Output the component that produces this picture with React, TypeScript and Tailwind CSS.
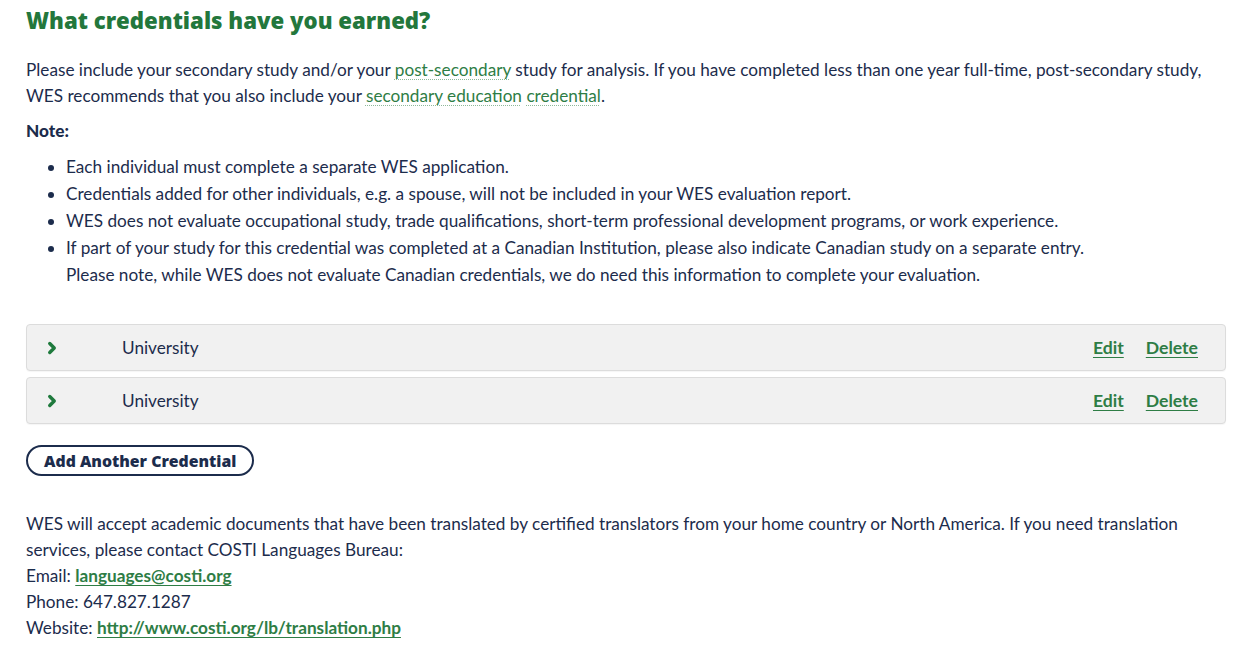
import { ChevronRight } from "lucide-react";

const notes = [
  "Each individual must complete a separate WES application.",
  "Credentials added for other individuals, e.g. a spouse, will not be included in your WES evaluation report.",
  "WES does not evaluate occupational study, trade qualifications, short-term professional development programs, or work experience.",
];

const credentials = ["University", "University"];

function DottedLink({ children }: { children: React.ReactNode }) {
  return (
    <a
      href="#"
      className="text-[#2e7d45] underline decoration-dotted decoration-[#8fb89a] decoration-1 underline-offset-[3px]"
    >
      {children}
    </a>
  );
}

function CredentialRow({ label }: { label: string }) {
  return (
    <div className="flex h-[47px] items-center rounded-[4px] border border-[#dcdcdc] bg-[#f1f1f1] pl-[16px] pr-[27px] shadow-[0_1px_1px_rgba(0,0,0,0.04)]">
      <ChevronRight className="size-[18px] text-[#1f7a3d]" strokeWidth={4.5} />
      <span className="ml-[61px] text-[#1c2c4c]">{label}</span>
      <div className="ml-auto flex gap-[22px] text-[17.6px] font-bold">
        <a href="#" className="text-[#2e7d45] underline underline-offset-[3px]">
          Edit
        </a>
        <a href="#" className="text-[#2e7d45] underline underline-offset-[3px]">
          Delete
        </a>
      </div>
    </div>
  );
}

export default function App() {
  return (
    <div className="min-h-screen bg-white font-['Lato',sans-serif] text-[17.2px] leading-[26px] text-[#1c2c4c]">
      <div className="w-[1226px] pl-[26px] pt-[6px]">
        <h1 className="font-['Open_Sans',sans-serif] text-[22.2px] font-extrabold leading-[30px] text-[#23773c]">
          What credentials have you earned?
        </h1>

        <p className="mt-[21px]">
          Please include your secondary study and/or your <DottedLink>post-secondary</DottedLink> study
          for analysis. If you have completed less than one year full-time, post-secondary study, WES
          recommends that you also include your <DottedLink>secondary education</DottedLink>{" "}
          <DottedLink>credential</DottedLink>.
        </p>

        <p className="mt-[9px] font-black">Note:</p>

        <ul className="mt-[9px] list-disc pl-[40px] leading-[27px]">
          {notes.map((note) => (
            <li key={note}>{note}</li>
          ))}
          <li>
            If part of your study for this credential was completed at a Canadian Institution, please also
            indicate Canadian study on a separate entry.
            <br />
            Please note, while WES does not evaluate Canadian credentials, we do need this information to
            complete your evaluation.
          </li>
        </ul>

        <div className="mt-[36px] flex flex-col gap-[6px]">
          {credentials.map((c, i) => (
            <CredentialRow key={i} label={c} />
          ))}
        </div>

        <button
          type="button"
          className="mt-[21px] h-[31px] rounded-full border-2 border-[#1c2c4c] px-[16px] font-['Open_Sans',sans-serif] text-[15.8px] font-extrabold text-[#1c2c4c]"
        >
          Add Another Credential
        </button>

        <div className="mt-[35px] pb-[20px]">
          <p>
            WES will accept academic documents that have been translated by certified translators from your
            home country or North America. If you need translation services, please contact COSTI Languages
            Bureau:
          </p>
          <p>
            Email:{" "}
            <a href="#" className="font-bold text-[#2e7d45] underline underline-offset-[3px]">
              languages@costi.org
            </a>
          </p>
          <p>Phone: 647.827.1287</p>
          <p>
            Website:{" "}
            <a href="#" className="font-bold text-[#2e7d45] underline underline-offset-[3px]">
              http://www.costi.org/lb/translation.php
            </a>
          </p>
        </div>
      </div>
    </div>
  );
}
